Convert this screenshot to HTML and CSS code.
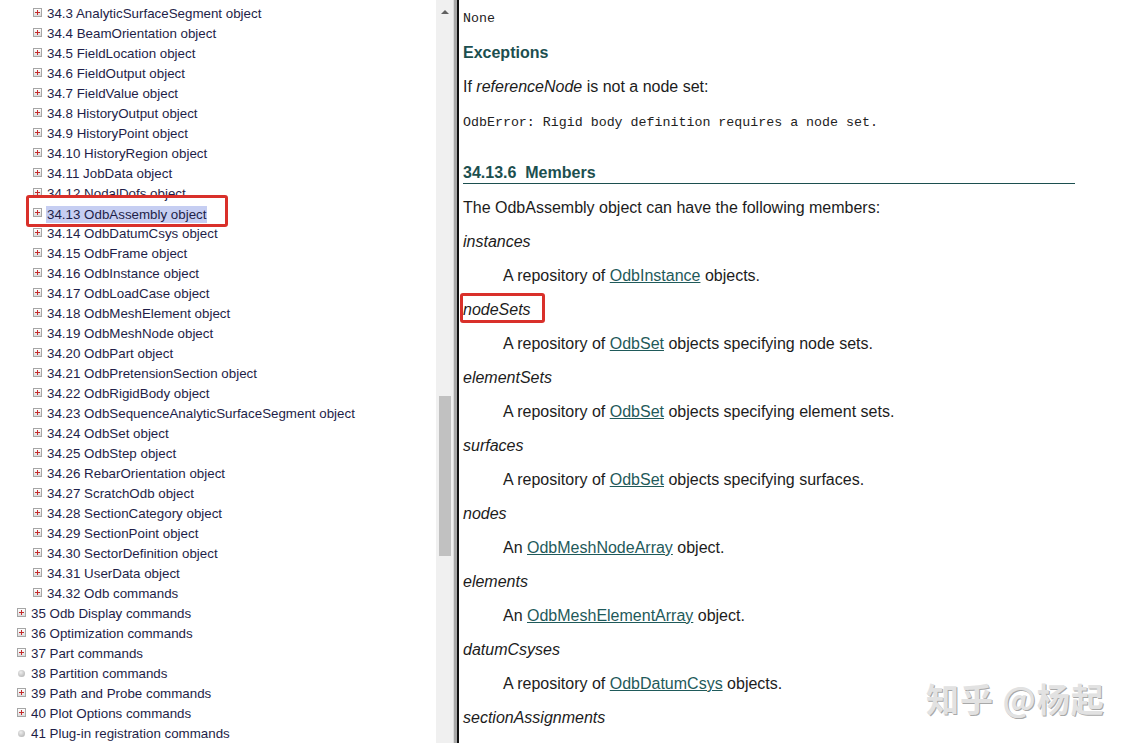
FILE: index.html
```html
<!DOCTYPE html>
<html lang="en">
<head>
<meta charset="utf-8">
<title>OdbAssembly object</title>
<link rel="stylesheet" href="styles.css">
</head>
<body>
<div class="frame">
  <nav class="toc">
    <ul class="tree">
      <li class="row l2"><span class="tg"></span><span class="lbl">34.3 AnalyticSurfaceSegment object</span></li>
      <li class="row l2"><span class="tg"></span><span class="lbl">34.4 BeamOrientation object</span></li>
      <li class="row l2"><span class="tg"></span><span class="lbl">34.5 FieldLocation object</span></li>
      <li class="row l2"><span class="tg"></span><span class="lbl">34.6 FieldOutput object</span></li>
      <li class="row l2"><span class="tg"></span><span class="lbl">34.7 FieldValue object</span></li>
      <li class="row l2"><span class="tg"></span><span class="lbl">34.8 HistoryOutput object</span></li>
      <li class="row l2"><span class="tg"></span><span class="lbl">34.9 HistoryPoint object</span></li>
      <li class="row l2"><span class="tg"></span><span class="lbl">34.10 HistoryRegion object</span></li>
      <li class="row l2"><span class="tg"></span><span class="lbl">34.11 JobData object</span></li>
      <li class="row l2"><span class="tg"></span><span class="lbl">34.12 NodalDofs object</span></li>
      <li class="row l2"><span class="tg"></span><span class="lbl sel">34.13 OdbAssembly object</span></li>
      <li class="row l2"><span class="tg"></span><span class="lbl">34.14 OdbDatumCsys object</span></li>
      <li class="row l2"><span class="tg"></span><span class="lbl">34.15 OdbFrame object</span></li>
      <li class="row l2"><span class="tg"></span><span class="lbl">34.16 OdbInstance object</span></li>
      <li class="row l2"><span class="tg"></span><span class="lbl">34.17 OdbLoadCase object</span></li>
      <li class="row l2"><span class="tg"></span><span class="lbl">34.18 OdbMeshElement object</span></li>
      <li class="row l2"><span class="tg"></span><span class="lbl">34.19 OdbMeshNode object</span></li>
      <li class="row l2"><span class="tg"></span><span class="lbl">34.20 OdbPart object</span></li>
      <li class="row l2"><span class="tg"></span><span class="lbl">34.21 OdbPretensionSection object</span></li>
      <li class="row l2"><span class="tg"></span><span class="lbl">34.22 OdbRigidBody object</span></li>
      <li class="row l2"><span class="tg"></span><span class="lbl">34.23 OdbSequenceAnalyticSurfaceSegment object</span></li>
      <li class="row l2"><span class="tg"></span><span class="lbl">34.24 OdbSet object</span></li>
      <li class="row l2"><span class="tg"></span><span class="lbl">34.25 OdbStep object</span></li>
      <li class="row l2"><span class="tg"></span><span class="lbl">34.26 RebarOrientation object</span></li>
      <li class="row l2"><span class="tg"></span><span class="lbl">34.27 ScratchOdb object</span></li>
      <li class="row l2"><span class="tg"></span><span class="lbl">34.28 SectionCategory object</span></li>
      <li class="row l2"><span class="tg"></span><span class="lbl">34.29 SectionPoint object</span></li>
      <li class="row l2"><span class="tg"></span><span class="lbl">34.30 SectorDefinition object</span></li>
      <li class="row l2"><span class="tg"></span><span class="lbl">34.31 UserData object</span></li>
      <li class="row l2"><span class="tg"></span><span class="lbl">34.32 Odb commands</span></li>
      <li class="row l1"><span class="tg"></span><span class="lbl">35 Odb Display commands</span></li>
      <li class="row l1"><span class="tg"></span><span class="lbl">36 Optimization commands</span></li>
      <li class="row l1"><span class="tg"></span><span class="lbl">37 Part commands</span></li>
      <li class="row l1"><span class="dot"></span><span class="lbl">38 Partition commands</span></li>
      <li class="row l1"><span class="tg"></span><span class="lbl">39 Path and Probe commands</span></li>
      <li class="row l1"><span class="tg"></span><span class="lbl">40 Plot Options commands</span></li>
      <li class="row l1"><span class="dot"></span><span class="lbl">41 Plug-in registration commands</span></li>
    </ul>
  </nav>
  <div class="scrollbar">
    <span class="arrow"></span>
    <span class="thumb"></span>
  </div>
  <div class="divider"></div>
  <main class="doc">
    <div class="line code">None</div>
    <div class="line head">Exceptions</div>
    <div class="line">If <em>referenceNode</em> is not a node set:</div>
    <div class="line code err">OdbError: Rigid body definition requires a node set.</div>
    <h3 class="section">34.13.6&nbsp; Members</h3>
    <div class="line">The OdbAssembly object can have the following members:</div>
    <div class="line"><em>instances</em></div>
    <div class="line desc">A repository of <a href="#">OdbInstance</a> objects.</div>
    <div class="line"><em>nodeSets</em></div>
    <div class="line desc">A repository of <a href="#">OdbSet</a> objects specifying node sets.</div>
    <div class="line"><em>elementSets</em></div>
    <div class="line desc">A repository of <a href="#">OdbSet</a> objects specifying element sets.</div>
    <div class="line"><em>surfaces</em></div>
    <div class="line desc">A repository of <a href="#">OdbSet</a> objects specifying surfaces.</div>
    <div class="line"><em>nodes</em></div>
    <div class="line desc">An <a href="#">OdbMeshNodeArray</a> object.</div>
    <div class="line"><em>elements</em></div>
    <div class="line desc">An <a href="#">OdbMeshElementArray</a> object.</div>
    <div class="line"><em>datumCsyses</em></div>
    <div class="line desc">A repository of <a href="#">OdbDatumCsys</a> objects.</div>
    <div class="line"><em>sectionAssignments</em></div>
  </main>
</div>
<div class="mark mark-toc"></div>
<div class="mark mark-member"></div>
<div class="watermark">知乎 @杨起</div>
</body>
</html>
```

FILE: styles.css
```css
html, body {
  margin: 0;
  padding: 0;
  background: #fff;
  height: 743px;
  overflow: hidden;
}

.frame {
  display: flex;
  height: 743px;
}

.toc {
  width: 436px;
  flex: none;
  overflow: hidden;
  font-family: "Liberation Sans", Arial, sans-serif;
  font-size: 13.35px;
  color: #1e1e48;
}

.tree {
  list-style: none;
  margin: 0;
  padding: 4px 0 0 0;
}

.row {
  display: flex;
  align-items: center;
  height: 20px;
  line-height: 20px;
  white-space: nowrap;
}

.row.l2 { padding-left: 33px; }
.row.l1 { padding-left: 17px; }

.tg {
  position: relative;
  flex: none;
  width: 9px;
  height: 9px;
  box-sizing: border-box;
  border: 1px solid #a6a6a6;
  background: linear-gradient(#ffffff, #dcdcdc);
  margin-right: 5px;
  margin-top: -3px;
}
.tg::before {
  content: "";
  position: absolute;
  left: 1px;
  top: 3px;
  width: 5px;
  height: 1px;
  background: #c42a2a;
}
.tg::after {
  content: "";
  position: absolute;
  left: 3px;
  top: 1px;
  width: 1px;
  height: 5px;
  background: #c42a2a;
}

.dot {
  flex: none;
  width: 7px;
  height: 7px;
  border-radius: 50%;
  background: radial-gradient(circle at 40% 35%, #eeeeee, #a9a9a9);
  margin: -2px 6px 0 1px;
}

.lbl.sel {
  background: #c6cef2;
  margin-left: -1px;
  padding: 0 1px;
  line-height: 17px;
}

.scrollbar {
  position: relative;
  width: 17px;
  flex: none;
  background: #f0f0f0;
}
.arrow {
  position: absolute;
  left: 5px;
  top: 10px;
  width: 0;
  height: 0;
  border-left: 4px solid transparent;
  border-right: 4px solid transparent;
  border-bottom: 4px solid #606060;
}
.thumb {
  position: absolute;
  left: 3px;
  top: 396px;
  width: 12px;
  height: 160px;
  background: #c1c1c1;
}

.divider {
  flex: none;
  width: 3px;
  background: #a8a8a8;
  border-left: 1px solid #dcdcdc;
  border-right: 2px solid #111;
}

.doc {
  flex: 1;
  padding: 2px 0 0 4px;
  font-family: "Liberation Sans", Arial, sans-serif;
  font-size: 16px;
  color: #1c1c1c;
}

.line {
  height: 34px;
  line-height: 34px;
  white-space: nowrap;
}

.code {
  font-family: "Liberation Mono", "Courier New", monospace;
  font-size: 13.3px;
  color: #222;
}
.err { margin-top: 2px; }

.head {
  font-weight: bold;
  color: #1c4f4f;
}

.section {
  margin: 23px 0 7px 0;
  width: 612px;
  height: 20px;
  line-height: 20px;
  font-size: 16px;
  font-weight: bold;
  color: #1c4f4f;
  border-bottom: 1px solid #1c4f4f;
}

.desc { padding-left: 40px; }

.doc a {
  color: #1f5a5a;
  text-decoration: underline;
}

.mark {
  position: absolute;
  box-sizing: border-box;
  border: 3px solid #d9302a;
  border-radius: 3px;
}
.mark-toc {
  left: 26px;
  top: 195px;
  width: 202px;
  height: 32px;
}
.mark-member {
  left: 460px;
  top: 293px;
  width: 85px;
  height: 30px;
}

.watermark {
  position: absolute;
  left: 926px;
  top: 674px;
  font-family: "Noto Sans CJK SC", sans-serif;
  font-size: 33px;
  font-weight: bold;
  color: #e2e2e2;
  text-shadow: 1px 1px 0 #a8a8a8;
  letter-spacing: 1px;
  white-space: nowrap;
}
```
